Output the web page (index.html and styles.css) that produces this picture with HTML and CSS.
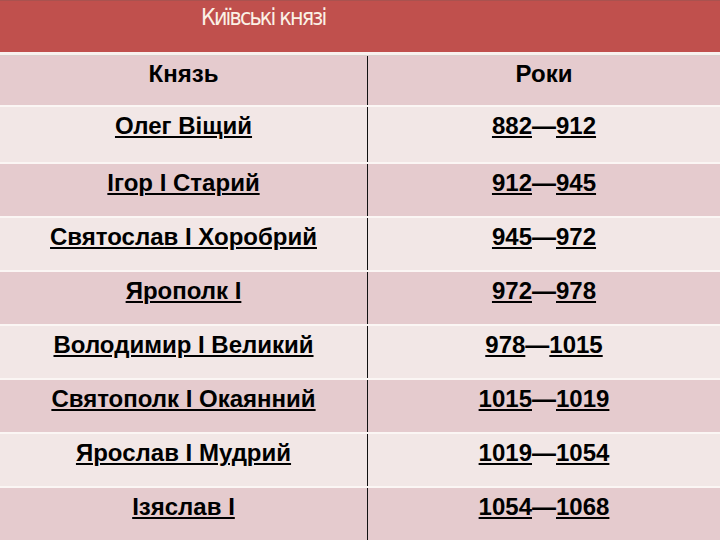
FILE: index.html
```html
<!DOCTYPE html>
<html lang="uk">
<head>
<meta charset="utf-8">
<title>Київські князі</title>
<link rel="stylesheet" href="styles.css">
</head>
<body>
<div class="slide">
  <header class="title-bar"><h1 class="title">Київські князі</h1></header>
  <div class="spacer"></div>
  <div class="table">
    <div class="row head"><div class="cell">Князь</div><div class="cell col2">Роки</div></div>
    <div class="row light first"><div class="cell"><u>Олег Віщий</u></div><div class="cell col2"><u>882</u>—<u>912</u></div></div>
    <div class="row dark"><div class="cell"><u>Ігор І Старий</u></div><div class="cell col2"><u>912</u>—<u>945</u></div></div>
    <div class="row light"><div class="cell"><u>Святослав І Хоробрий</u></div><div class="cell col2"><u>945</u>—<u>972</u></div></div>
    <div class="row dark"><div class="cell"><u>Ярополк І</u></div><div class="cell col2"><u>972</u>—<u>978</u></div></div>
    <div class="row light"><div class="cell"><u>Володимир І Великий</u></div><div class="cell col2"><u>978</u>—<u>1015</u></div></div>
    <div class="row dark"><div class="cell"><u>Святополк І Окаянний</u></div><div class="cell col2"><u>1015</u>—<u>1019</u></div></div>
    <div class="row light"><div class="cell"><u>Ярослав І Мудрий</u></div><div class="cell col2"><u>1019</u>—<u>1054</u></div></div>
    <div class="row dark"><div class="cell"><u>Ізяслав І</u></div><div class="cell col2"><u>1054</u>—<u>1068</u></div></div>
  </div>
</div>
</body>
</html>
```
FILE: styles.css
```css
html, body {
  margin: 0;
  padding: 0;
  background: #f4ecea;
}
.slide {
  width: 720px;
  height: 540px;
  overflow: hidden;
  display: flex;
  flex-direction: column;
}
.title-bar {
  height: 51px;
  background: #c0504d;
  border-top: 1px solid #a9524f;
  display: flex;
  align-items: flex-start;
}
.title {
  margin: 0;
  padding: 1px 0 0 201px;
  font-family: "DejaVu Sans Condensed", "DejaVu Sans", sans-serif;
  font-stretch: condensed;
  font-style: normal;
  font-weight: normal;
  font-size: 23px;
  line-height: 30px;
  letter-spacing: -1.8px;
  color: #fbf1e6;
}
.spacer {
  height: 3px;
  background: #f8f1ee;
}
.table {
  display: flex;
  flex-direction: column;
}
.row {
  display: grid;
  grid-template-columns: 367px 1fr;
  height: 54px;
  box-sizing: border-box;
  border-top: 2px solid #fbf6f4;
  font-family: "Liberation Sans", Arial, sans-serif;
  font-weight: bold;
  font-size: 24px;
  line-height: 28px;
  color: #000;
}
.row.head {
  height: 50px;
  border-top: 1px solid #d9d1cd;
  background: #e5cbce;
}
.row.first { height: 57px; }
.row.light { background: #f2e7e6; }
.row.dark { background: #e5cbce; }
.cell {
  text-align: center;
  padding-top: 5px;
}
.head .cell { padding-top: 4px; }
.col2 {
  border-left: 1px solid #111;
}
u {
  text-decoration-thickness: 2px;
  text-underline-offset: 2px;
}
```
